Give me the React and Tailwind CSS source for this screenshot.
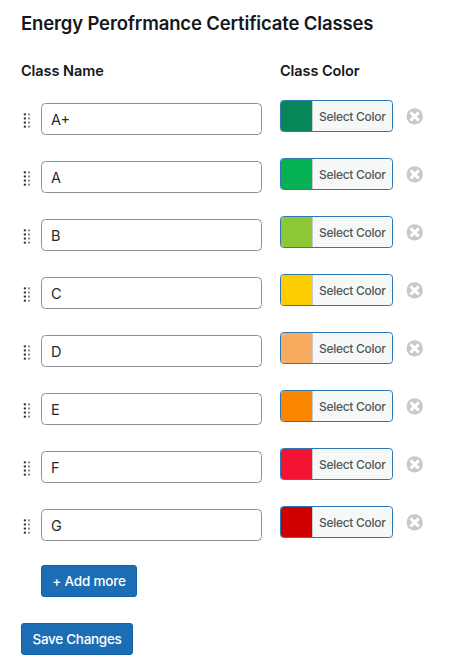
const rows = [
  { name: 'A+', color: 'bg-[#078658]' },
  { name: 'A', color: 'bg-[#05b153]' },
  { name: 'B', color: 'bg-[#8dc937]' },
  { name: 'C', color: 'bg-[#fecc02]' },
  { name: 'D', color: 'bg-[#f8ac60]' },
  { name: 'E', color: 'bg-[#fb8700]' },
  { name: 'F', color: 'bg-[#f31433]' },
  { name: 'G', color: 'bg-[#d00000]' },
];

function DragHandle() {
  return (
    <svg className="mt-[13px] ml-[2px] h-[15px] w-2 shrink-0" viewBox="0 0 8 15">
      {[0.4, 4.5, 8.6, 12.7].map((y) => (
        <g key={y}>
          <rect x="0.8" y={y} width="2.1" height="1.9" fill="#26292d" />
          <rect x="5" y={y} width="2.1" height="1.9" fill="#8b8d90" />
        </g>
      ))}
    </svg>
  );
}

function RemoveIcon() {
  return (
    <svg className="h-[17px] w-[17px]" viewBox="0 0 17 17">
      <circle cx="8.7" cy="8.4" r="8.2" fill="#c8c9ca" />
      <path d="M4.6 4.3 12.8 12.5M12.8 4.3 4.6 12.5" stroke="#fff" strokeWidth="3.1" />
    </svg>
  );
}

function ClassRow({ name, color }) {
  return (
    <li className="flex h-[58px] items-start">
      <DragHandle />
      <input
        className="mt-[3px] ml-[10px] h-8 w-[221px] rounded-[4.5px] border border-[#8f9196] bg-white pl-[9px] pt-px text-[14.5px] text-[#252a30] outline-none"
        defaultValue={name}
        aria-label="Class Name"
      />
      <button className="ml-[18px] flex h-8 w-[113px] overflow-hidden rounded-[3.5px] border border-[#2c77b5] bg-[#f6f8f8]">
        <span className={`h-full w-[31px] shrink-0 ${color}`} />
        <span className="h-full grow border-l border-[#c9cccf] pt-px pl-[6px] text-left text-[12px] leading-[30px] font-medium tracking-[-0.29px] whitespace-nowrap text-[#50575e]">
          Select Color
        </span>
      </button>
      <button className="mt-2 ml-[13px]" aria-label="Remove">
        <RemoveIcon />
      </button>
    </li>
  );
}

export default function App() {
  return (
    <main className="h-[669px] w-[450px] overflow-hidden bg-white pl-[21px] font-['Inter',sans-serif] text-[#14181c]">
      <h1 className="pt-[10px] text-[18.5px] leading-[26px] font-semibold tracking-[-0.15px] whitespace-nowrap">
        Energy Perofrmance Certificate Classes
      </h1>
      <div className="mt-[25px] flex h-5 text-[14.5px] leading-5 font-semibold tracking-[-0.07px]">
        <span className="w-[259px]">Class Name</span>
        <span>Class Color</span>
      </div>
      <ul className="mt-[19px]">
        {rows.map((row) => (
          <ClassRow key={row.name} {...row} />
        ))}
      </ul>
      <div className="flex flex-col items-start">
        <button className="mt-px ml-5 h-8 w-24 rounded-[3px] border border-[#0f62a8] bg-[#1c6eb4] text-[13.5px] font-medium tracking-[-0.2px] whitespace-nowrap text-white">
          + Add more
        </button>
        <button className="mt-[26px] h-8 w-28 rounded-[3px] border border-[#0f62a8] bg-[#1c6eb4] text-[13.5px] font-medium tracking-[-0.3px] whitespace-nowrap text-white">
          Save Changes
        </button>
      </div>
    </main>
  );
}
